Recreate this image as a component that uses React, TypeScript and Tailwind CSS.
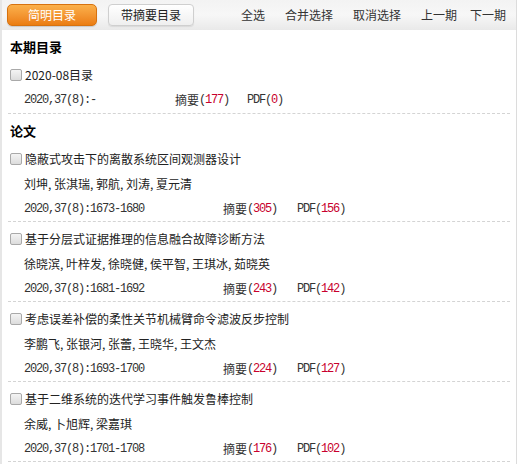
import React from "react";

const cjk = { fontFamily: '"Noto Sans CJK SC", "Noto Sans", sans-serif' };

type Item = { title: string; authors: string; pages: string; abs: string; pdf: string };

const items: Item[] = [
  { title: "隐蔽式攻击下的离散系统区间观测器设计", authors: "刘坤, 张淇瑞, 郭航, 刘涛, 夏元清", pages: "2020,37(8):1673-1680", abs: "305", pdf: "156" },
  { title: "基于分层式证据推理的信息融合故障诊断方法", authors: "徐晓滨, 叶梓发, 徐晓健, 侯平智, 王琪冰, 茹晓英", pages: "2020,37(8):1681-1692", abs: "243", pdf: "142" },
  { title: "考虑误差补偿的柔性关节机械臂命令滤波反步控制", authors: "李鹏飞, 张银河, 张蕾, 王晓华, 王文杰", pages: "2020,37(8):1693-1700", abs: "224", pdf: "127" },
  { title: "基于二维系统的迭代学习事件触发鲁棒控制", authors: "余威, 卜旭辉, 梁嘉琪", pages: "2020,37(8):1701-1708", abs: "176", pdf: "102" },
];

function Box() {
  return (
    <span className="inline-block w-[12px] h-[12px] border border-[#a9a9a9] rounded-[2px] bg-gradient-to-b from-[#f4f4f4] to-[#dcdcdc] shrink-0" />
  );
}

function Mono({ children, className = "" }: { children: React.ReactNode; className?: string }) {
  return (
    <span
      className={"text-[12px] tracking-[-1.2px] " + className}
      style={{ fontFamily: '"Liberation Mono", monospace' }}
    >
      {children}
    </span>
  );
}

function Meta({ pages, abs, pdf }: { pages: string; abs: string; pdf: string }) {
  return (
    <div className="h-[20px] flex items-center pl-[16px] text-[#333] whitespace-nowrap">
      <Mono>{pages}</Mono>
      <span className="ml-[79px] flex items-center">
        <span className="text-[12px]" style={cjk}>摘要</span>
        <Mono>(</Mono>
        <Mono className="text-[#c8002d]">{abs}</Mono>
        <Mono>)</Mono>
      </span>
      <span className="ml-[20px] flex items-center">
        <Mono>PDF(</Mono>
        <Mono className="text-[#c8002d]">{pdf}</Mono>
        <Mono>)</Mono>
      </span>
    </div>
  );
}

export default function App() {
  return (
    <div
      className="w-[517px] h-[464px] overflow-hidden bg-white border-l-2 border-l-[#e6e6e6] border-r border-r-[#dcdcdc] box-border text-[#222]"
      style={cjk}
    >
      {/* toolbar */}
      <div className="h-[30px] flex items-center pl-[5px] bg-gradient-to-b from-[#f3f3f3] via-[#f7f7f7] to-[#e9e9e9] text-[12px] text-[#333]">
        <div className="w-[90px] h-[22px] rounded-[5px] border border-[#d7720f] bg-gradient-to-b from-[#fbb04a] to-[#eb7d10] text-white flex items-center justify-center text-[12px] shadow-[0_1px_1px_rgba(0,0,0,0.15)]">
          简明目录
        </div>
        <div className="ml-[11px] w-[86px] h-[22px] rounded-[4px] border border-[#cfcfcf] bg-gradient-to-b from-white to-[#efefef] flex items-center justify-center text-[12px] text-[#222] shadow-[0_1px_1px_rgba(0,0,0,0.08)]">
          带摘要目录
        </div>
        <span className="ml-[47px]">全选</span>
        <span className="ml-[20px]">合并选择</span>
        <span className="ml-[20px]">取消选择</span>
        <span className="ml-[20px]">上一期</span>
        <span className="ml-[13px]">下一期</span>
      </div>

      <div className="mx-[6px]">
        <div className="h-[34px] flex items-center pl-[2px] text-[13px] font-bold text-black">本期目录</div>
        <div className="pt-[1px] pb-[3px] border-b border-dashed border-[#d4d4d4]">
          <div className="h-[20px] flex items-center pl-[2px] gap-[3px] text-[12px]">
            <Box />
            <span>2020-08目录</span>
          </div>
          <div className="mt-[5px] flex items-center">
            <div className="h-[20px] flex items-center pl-[16px] text-[#333] whitespace-nowrap">
              <Mono>2020,37(8):-</Mono>
              <span className="ml-[79px] flex items-center">
                <span className="text-[12px]">摘要</span>
                <Mono>(</Mono>
                <Mono className="text-[#c8002d]">177</Mono>
                <Mono>)</Mono>
              </span>
              <span className="ml-[18px] flex items-center">
                <Mono>PDF(</Mono>
                <Mono className="text-[#c8002d]">0</Mono>
                <Mono>)</Mono>
              </span>
            </div>
          </div>
        </div>
        <div className="h-[28px] pt-[9px] pl-[2px] text-[13px] leading-[16px] font-bold text-black">论文</div>
        {items.map((it) => (
          <div key={it.title} className="pt-[7px] pb-[2px] border-b border-dashed border-[#d4d4d4]">
            <div className="h-[20px] flex items-center pl-[2px] gap-[3px] text-[12px] whitespace-nowrap">
              <Box />
              <span>{it.title}</span>
            </div>
            <div className="mt-[5px] h-[20px] flex items-center pl-[16px] text-[12px] whitespace-nowrap">
              {it.authors}
            </div>
            <div className="mt-[5px]">
              <Meta pages={it.pages} abs={it.abs} pdf={it.pdf} />
            </div>
          </div>
        ))}
      </div>
    </div>
  );
}
